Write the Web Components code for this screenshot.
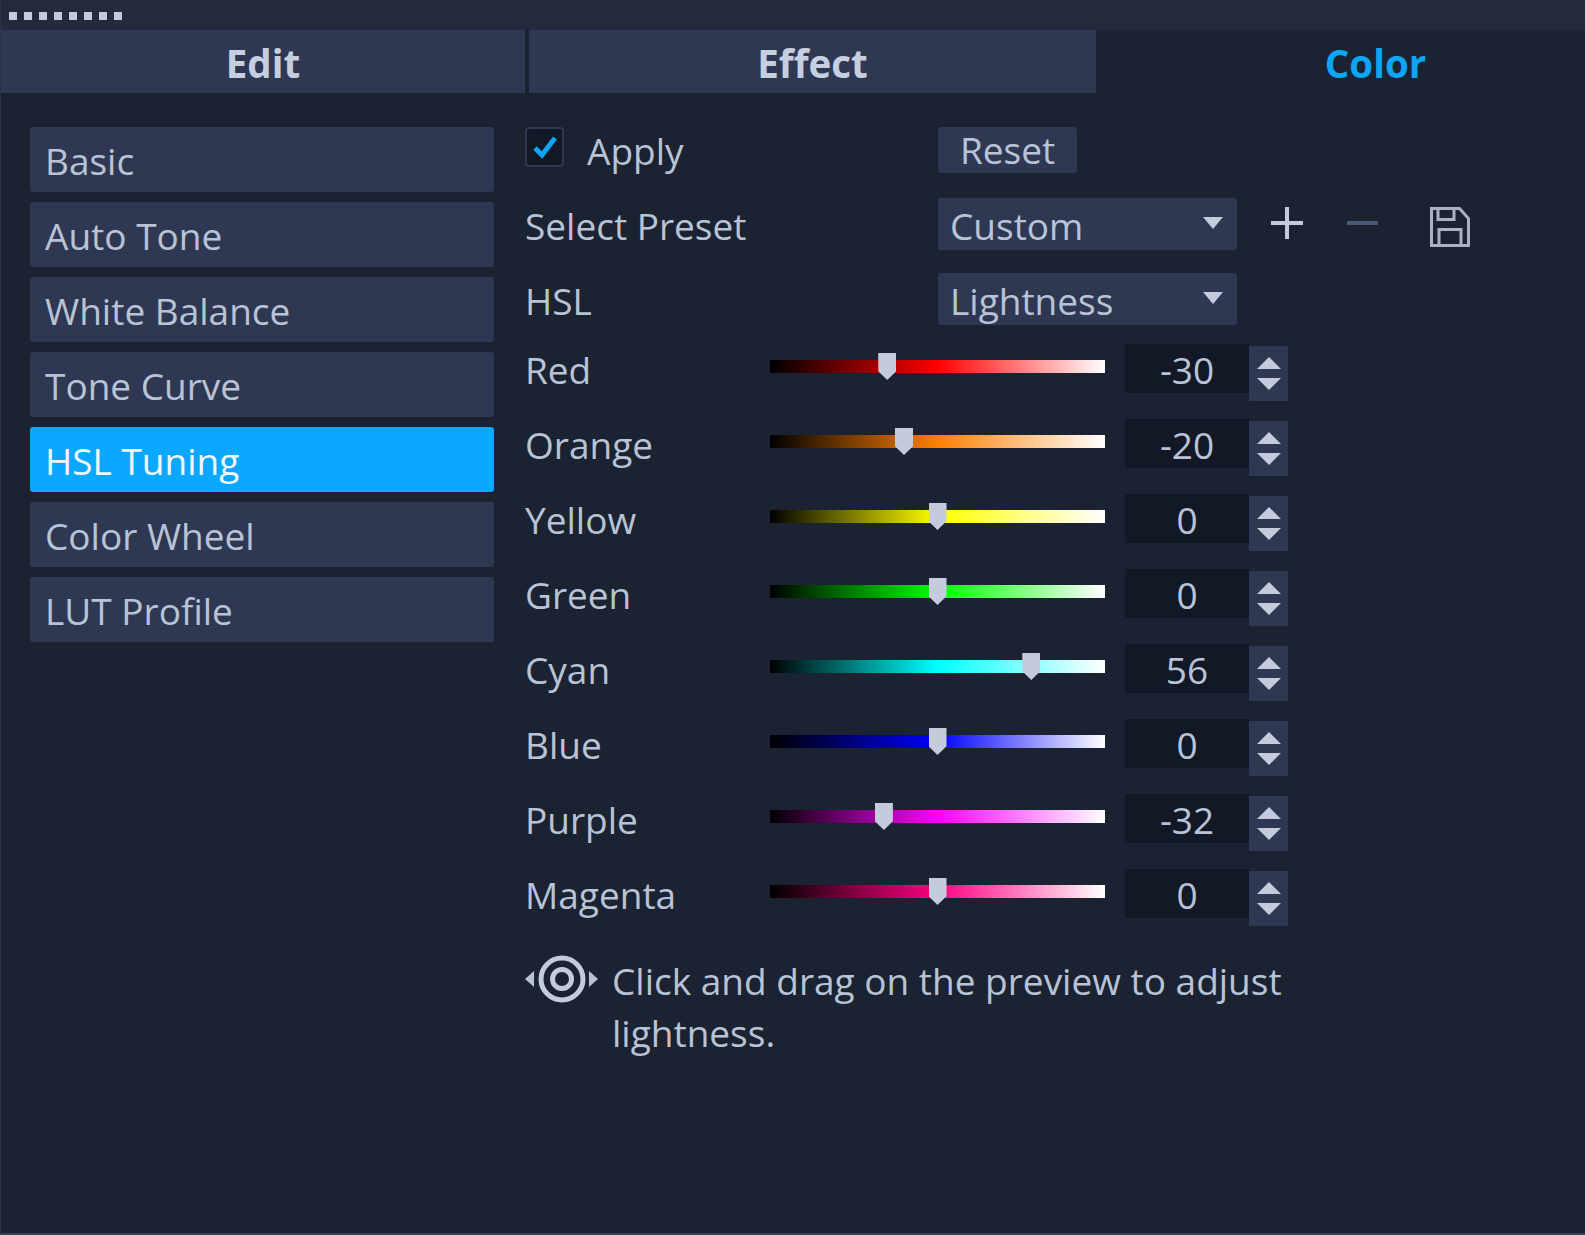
<!DOCTYPE html>
<html>
<head>
<meta charset="utf-8">
<title>HSL Tuning</title>
<style>
  html, body { margin: 0; height: 100%; background: #1b2231; }
  body { font: 37px "Open Sans", "Noto Sans", sans-serif; color: #b9c3d6; }
</style>
</head>
<body>
<color-panel>
  <grip-bar slot="grip"></grip-bar>
  <tab-item slot="tabs" style="width:524px">Edit</tab-item>
  <tab-item slot="tabs" style="width:567px">Effect</tab-item>
  <tab-item slot="tabs" active style="flex:1;padding-left:66px">Color</tab-item>

  <side-button slot="side">Basic</side-button>
  <side-button slot="side">Auto Tone</side-button>
  <side-button slot="side">White Balance</side-button>
  <side-button slot="side">Tone Curve</side-button>
  <side-button slot="side" active>HSL Tuning</side-button>
  <side-button slot="side">Color Wheel</side-button>
  <side-button slot="side">LUT Profile</side-button>

  <apply-row slot="main"></apply-row>
  <select-row slot="main" label="Select Preset" value="Custom" tools style="margin-bottom:23px"></select-row>
  <select-row slot="main" label="HSL" value="Lightness" style="margin-bottom:21px"></select-row>
  <hue-row slot="main" label="Red" color="#ff0000" value="-30"></hue-row>
  <hue-row slot="main" label="Orange" color="#ff7f00" value="-20"></hue-row>
  <hue-row slot="main" label="Yellow" color="#ffff00" value="0"></hue-row>
  <hue-row slot="main" label="Green" color="#00ff00" value="0"></hue-row>
  <hue-row slot="main" label="Cyan" color="#00ffff" value="56"></hue-row>
  <hue-row slot="main" label="Blue" color="#0000ff" value="0"></hue-row>
  <hue-row slot="main" label="Purple" color="#ff00ff" value="-32"></hue-row>
  <hue-row slot="main" label="Magenta" color="#ff0080" value="0"></hue-row>
  <hint-note slot="main">Click and drag on the preview to adjust lightness.</hint-note>
</color-panel>

<script>
class ColorPanel extends HTMLElement {
  constructor() {
    super();
    this.attachShadow({ mode: 'open' }).innerHTML = `
      <style>
        :host { display: flex; flex-direction: column; box-sizing: border-box; height: 1235px; background: #1b2231;
                border-left: 1px solid #2b3244; border-bottom: 2px solid #3a4050; }
        .tabs { display: flex; gap: 4px; }
        .body { display: flex; gap: 31px; padding: 34px 0 0 29px; }
        .side { display: flex; flex-direction: column; gap: 10px; width: 464px; }
        .main { display: flex; flex-direction: column; width: 790px; }
      </style>
      <slot name="grip"></slot>
      <div class="tabs"><slot name="tabs"></slot></div>
      <div class="body">
        <div class="side"><slot name="side"></slot></div>
        <div class="main"><slot name="main"></slot></div>
      </div>`;
  }
}

class GripBar extends HTMLElement {
  constructor() {
    super();
    this.attachShadow({ mode: 'open' }).innerHTML = `
      <style>
        :host { display: flex; gap: 7px; align-items: center; box-sizing: border-box; height: 30px; padding: 2px 0 0 8px; background: #232a3c; }
        i { width: 8px; height: 8px; background: #c5cbdc; }
      </style>
      ${'<i></i>'.repeat(8)}`;
  }
}

class TabItem extends HTMLElement {
  constructor() {
    super();
    this.attachShadow({ mode: 'open' }).innerHTML = `
      <style>
        :host { display: flex; align-items: center; justify-content: center; box-sizing: border-box; height: 63px; padding-top: 2px;
                background: #2f3853; font-weight: 700; font-size: 38.5px; color: #c5cfe0; }
        :host([active]) { background: transparent; color: #0ea5f5; }
      </style>
      <slot></slot>`;
  }
}

class SideButton extends HTMLElement {
  constructor() {
    super();
    this.attachShadow({ mode: 'open' }).innerHTML = `
      <style>
        :host { display: flex; align-items: center; box-sizing: border-box; height: 65px; padding: 1px 0 0 15px;
                background: #2f3853; border-radius: 3px; color: #b9c3d6; }
        :host([active]) { background: #0aa8ff; color: #f2f7fc; }
      </style>
      <slot></slot>`;
  }
}

class ApplyRow extends HTMLElement {
  constructor() {
    super();
    this.attachShadow({ mode: 'open' }).innerHTML = `
      <style>
        :host { display: flex; align-items: flex-start; height: 46px; margin-bottom: 25px; }
        .box { display: flex; align-items: center; justify-content: center; box-sizing: border-box; width: 39px; height: 40px;
               background: #121825; border: 2px solid #2f3853; border-radius: 4px; }
        .label { width: 351px; margin-left: 23px; line-height: 48px; }
        .reset { box-sizing: border-box; width: 139px; height: 46px; line-height: 46px; text-align: center;
                 background: #2f3853; border-radius: 3px; }
      </style>
      <span class="box">
        <svg width="28" height="26" viewBox="0 0 28 26"><path d="M4 14l7 7L24 4" fill="none" stroke="#0ea5f5" stroke-width="5"/></svg>
      </span>
      <span class="label">Apply</span>
      <span class="reset">Reset</span>`;
  }
}

class SelectRow extends HTMLElement {
  constructor() {
    super();
    const tools = this.hasAttribute('tools') ? `
      <svg class="tools" width="240" height="48" viewBox="0 0 240 48">
        <path d="M34 23h32M50 7v32" stroke="#c5cbdc" stroke-width="4" fill="none"/>
        <path d="M110 23h31" stroke="#4a5878" stroke-width="4" fill="none"/>
        <path d="M194.500 8.500h28l9 10v27h-37zM201 8.500v11h16v-11M202 45.500v-16h22v16" stroke="#a9b2c5" stroke-width="3" fill="none"/>
      </svg>` : '';
    this.attachShadow({ mode: 'open' }).innerHTML = `
      <style>
        :host { display: flex; align-items: center; height: 52px; }
        .label { flex: none; width: 413px; padding-top: 2px; }
        .drop { display: flex; flex: none; align-items: center; justify-content: space-between; box-sizing: border-box;
                width: 299px; height: 52px; padding: 2px 14px 0 12px; background: #2f3853; border-radius: 3px; }
        .arrow { width: 0; height: 0; margin-bottom: 4px; border: 10px solid transparent; border-top: 12px solid #c5cbdc; border-bottom: 0; }
        .tools { flex: none; }
      </style>
      <span class="label">${this.getAttribute('label')}</span>
      <span class="drop"><span>${this.getAttribute('value')}</span><i class="arrow"></i></span>
      ${tools}`;
  }
}

class HueRow extends HTMLElement {
  constructor() {
    super();
    const value = Number(this.getAttribute('value'));
    const color = this.getAttribute('color');
    this.attachShadow({ mode: 'open' }).innerHTML = `
      <style>
        :host { display: flex; align-items: flex-start; height: 55px; margin-bottom: 20px; }
        .label { width: 245px; height: 48px; line-height: 48px; }
        .slider { position: relative; width: 335px; height: 13px; margin: 14px 20px 0 0;
                  background: linear-gradient(to right, #000 0%, ${color} 50%, #fff 100%); }
        .thumb { position: absolute; top: -7px; left: calc(50% + ${value * 1.675}px - 9px); width: 18px; height: 27px;
                 background: #c5cbdc; clip-path: polygon(0 0, 100% 0, 100% 68%, 50% 100%, 0 68%); }
        .num { box-sizing: border-box; width: 124px; height: 49px; margin-top: -2px; line-height: 52px;
               text-align: center; background: #121825; }
        .spin { display: flex; flex-direction: column; align-items: center; justify-content: center; gap: 9px;
                width: 39px; height: 55px; background: #2f3853; }
        .up, .down { width: 0; height: 0; border: 12px solid transparent; }
        .up { border-bottom: 12px solid #c5cbdc; border-top: 0; }
        .down { border-top: 12px solid #c5cbdc; border-bottom: 0; }
      </style>
      <span class="label">${this.getAttribute('label')}</span>
      <span class="slider"><i class="thumb"></i></span>
      <span class="num">${value}</span>
      <span class="spin"><i class="up"></i><i class="down"></i></span>`;
  }
}

class HintNote extends HTMLElement {
  constructor() {
    super();
    this.attachShadow({ mode: 'open' }).innerHTML = `
      <style>
        :host { display: flex; align-items: flex-start; gap: 14px; margin-top: 9px; line-height: 52px; width: 775px; }
        svg { flex: none; }
      </style>
      <svg width="73" height="48" viewBox="0 0 73 48">
        <path d="M0 24l9-8v16zM73 24l-9-8v16z" fill="#b9c3d6"/>
        <circle cx="37" cy="24" r="21" fill="none" stroke="#c5cbdc" stroke-width="5"/>
        <circle cx="37" cy="24" r="9.5" fill="none" stroke="#c5cbdc" stroke-width="5"/>
      </svg>
      <span><slot></slot></span>`;
  }
}

customElements.define('color-panel', ColorPanel);
customElements.define('grip-bar', GripBar);
customElements.define('tab-item', TabItem);
customElements.define('side-button', SideButton);
customElements.define('apply-row', ApplyRow);
customElements.define('select-row', SelectRow);
customElements.define('hue-row', HueRow);
customElements.define('hint-note', HintNote);
</script>
</body>
</html>
